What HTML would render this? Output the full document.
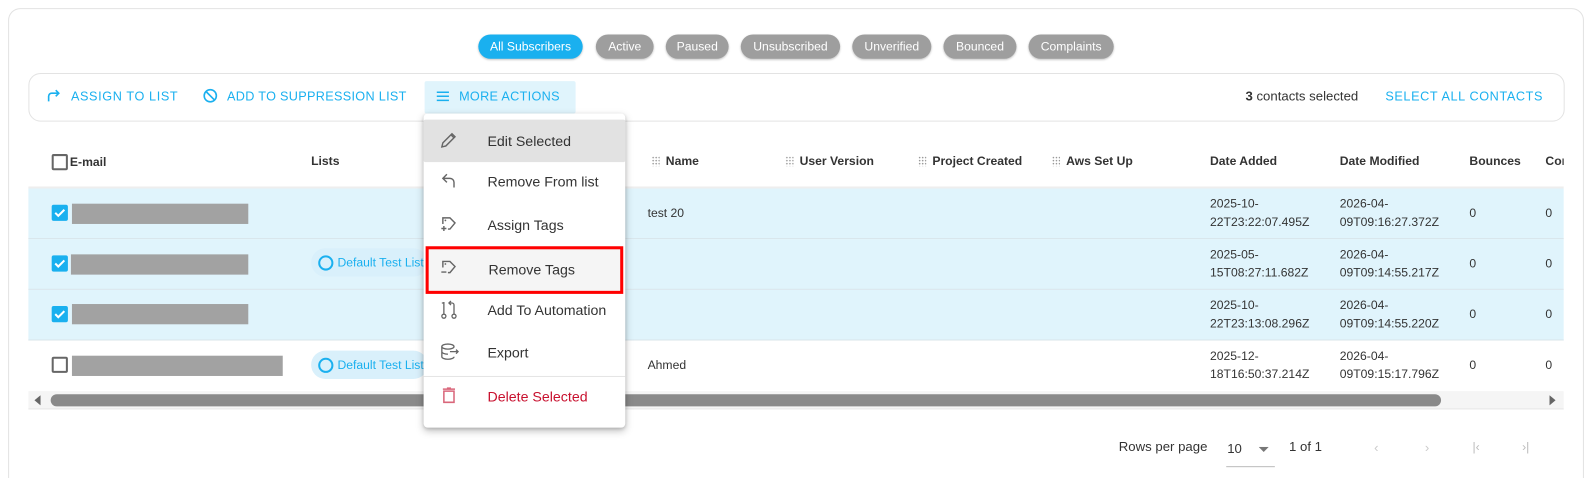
<!DOCTYPE html>
<html style="width:1589px;height:478px;overflow:hidden"><head><meta charset="utf-8">
<style>
*{box-sizing:border-box;margin:0;padding:0}
body{width:1589px;height:478px;background:#fff;font-family:"Liberation Sans",Arial,sans-serif;position:relative;overflow:hidden;color:#222}
#w{position:absolute;left:0;top:0;width:1568px;height:472px;transform:scale(1.0134);transform-origin:0 0;overflow:hidden}
.abs{position:absolute}
.card{left:8px;top:8px;width:1555px;height:480px;border:1px solid #e2e2e2;border-radius:12px}
.chip{position:absolute;top:34px;height:24px;border-radius:12px;background:#9e9e9e;color:#fff;font-size:12px;line-height:24px;text-align:center;box-shadow:0 1px 2px rgba(0,0,0,.25)}
.tb{left:28px;top:72px;width:1516px;height:48px;border:1px solid #e3e3e3;border-radius:12px}
.btn{position:absolute;top:88px;font-size:12.5px;letter-spacing:0.6px;color:#1ab0ef;font-weight:500}
.th{position:absolute;top:152px;font-size:12px;font-weight:bold;color:#333}
.row{position:absolute;left:28px;width:1515px;border-bottom:1px solid #d8e4ea}
.sel{background:#e0f4fc}
.cb{position:absolute;left:51px;width:16px;height:16px;border-radius:2px}
.cbon{background:#1ab0ef}
.cboff{border:2px solid #666;background:#fff}
.blur{position:absolute;height:20px;background:#a2a2a2}
.td{position:absolute;font-size:12px;color:#333;line-height:18px}
.chipl{position:absolute;left:307px;width:115px;height:28px;border-radius:14px;background:#d9f0fb;color:#1ab0ef;font-size:12px;line-height:28px;padding-left:26px;overflow:hidden;white-space:nowrap}
.chipl:before{content:"";position:absolute;left:7px;top:7px;width:11px;height:11px;border:2px solid #1ab0ef;border-radius:50%}
.menu{left:418px;top:112px;width:199px;height:310px;background:#fff;border-radius:4px;box-shadow:0 3px 8px rgba(0,0,0,.25),0 1px 3px rgba(0,0,0,.15)}
.mi{position:absolute;left:0;width:199px;height:42px;font-size:14px;color:#333;line-height:42px;padding-left:63px}
.mi svg{position:absolute;left:16px;top:11px}
.grip{display:inline-block;width:8px;height:10px;margin-right:6px;background-image:radial-gradient(#999 0.8px,transparent 0.9px);background-size:3px 3px;vertical-align:-1px}
</style></head><body><div id="w">
<div class="abs card"></div>
<div class="chip" style="left:472px;width:103px;background:#1ab0ef">All Subscribers</div>
<div class="chip" style="left:588px;width:57px">Active</div>
<div class="chip" style="left:657px;width:62px">Paused</div>
<div class="chip" style="left:731px;width:98px">Unsubscribed</div>
<div class="chip" style="left:841px;width:78px">Unverified</div>
<div class="chip" style="left:931px;width:72px">Bounced</div>
<div class="chip" style="left:1015px;width:84px">Complaints</div>

<div class="abs tb"></div>
<svg class="abs" style="left:46px;top:87px" width="14" height="14" viewBox="0 0 14 14"><path d="M2 13V8a3 3 0 0 1 3-3h7M9 2l3 3-3 3" fill="none" stroke="#1ab0ef" stroke-width="1.6"/></svg>
<div class="btn" style="left:70px">ASSIGN TO LIST</div>
<svg class="abs" style="left:200px;top:87px" width="15" height="15" viewBox="0 0 15 15"><circle cx="7.5" cy="7.5" r="6" fill="none" stroke="#1ab0ef" stroke-width="1.6"/><path d="M3.3 3.3l8.4 8.4" stroke="#1ab0ef" stroke-width="1.6"/></svg>
<div class="btn" style="left:224px;letter-spacing:0.3px">ADD TO SUPPRESSION LIST</div>
<div class="abs" style="left:419px;top:80px;width:149px;height:32px;background:#e0f4fc;border-radius:2px"></div>
<svg class="abs" style="left:430px;top:89px" width="14" height="12" viewBox="0 0 14 12"><path d="M1 2h12M1 6h12M1 10h12" stroke="#1ab0ef" stroke-width="1.5"/></svg>
<div class="btn" style="left:453px;letter-spacing:0.3px">MORE ACTIONS</div>
<div class="abs" style="left:1229px;top:87px;font-size:13px;color:#333"><b>3</b> contacts selected</div>
<div class="btn" style="left:1367px">SELECT ALL CONTACTS</div>

<div class="abs" style="left:51px;top:152px;width:16px;height:16px;border:2px solid #666;border-radius:2px"></div>
<div class="th" style="left:69px;top:153px">E-mail</div>
<div class="th" style="left:307px">Lists</div>
<div class="th" style="left:643px"><span class="grip"></span>Name</div>
<div class="th" style="left:775px"><span class="grip"></span>User Version</div>
<div class="th" style="left:906px"><span class="grip"></span>Project Created</div>
<div class="th" style="left:1038px"><span class="grip"></span>Aws Set Up</div>
<div class="th" style="left:1194px">Date Added</div>
<div class="th" style="left:1322px">Date Modified</div>
<div class="th" style="left:1450px">Bounces</div>
<div class="th" style="left:1525px;width:18px;overflow:hidden;white-space:nowrap">Complaints</div>
<div class="abs" style="left:28px;top:184px;width:1515px;height:2px;background:#eee"></div>

<div class="row sel" style="top:186px;height:50px"></div>
<div class="row sel" style="top:236px;height:50px"></div>
<div class="row sel" style="top:286px;height:50px"></div>
<div class="row" style="top:336px;height:49px;border-bottom:none"></div>

<div class="cb cbon" style="top:202px"></div><div class="blur" style="left:71px;top:201px;width:174px"></div>
<div class="cb cbon" style="top:252px"></div><div class="blur" style="left:70px;top:251px;width:175px"></div>
<div class="cb cbon" style="top:302px"></div><div class="blur" style="left:71px;top:300px;width:174px"></div>
<div class="cb cboff" style="top:352px"></div><div class="blur" style="left:71px;top:351px;width:208px"></div>
<svg class="abs" style="left:51px;top:202px" width="16" height="116"><g fill="none" stroke="#fff" stroke-width="2"><path d="M3.5 8l3 3 6-6"/><path d="M3.5 58l3 3 6-6"/><path d="M3.5 108l3 3 6-6"/></g></svg>
<div class="chipl" style="top:245px">Default Test List</div>
<div class="chipl" style="top:346px">Default Test List</div>
<div class="td" style="left:639px;top:201px">test 20</div>
<div class="td" style="left:639px;top:351px">Ahmed</div>

<div class="td" style="left:1194px;top:192px">2025-10-<br>22T23:22:07.495Z</div>
<div class="td" style="left:1322px;top:192px">2026-04-<br>09T09:16:27.372Z</div>
<div class="td" style="left:1450px;top:201px">0</div><div class="td" style="left:1525px;top:201px">0</div>
<div class="td" style="left:1194px;top:242px">2025-05-<br>15T08:27:11.682Z</div>
<div class="td" style="left:1322px;top:242px">2026-04-<br>09T09:14:55.217Z</div>
<div class="td" style="left:1450px;top:251px">0</div><div class="td" style="left:1525px;top:251px">0</div>
<div class="td" style="left:1194px;top:292px">2025-10-<br>22T23:13:08.296Z</div>
<div class="td" style="left:1322px;top:292px">2026-04-<br>09T09:14:55.220Z</div>
<div class="td" style="left:1450px;top:301px">0</div><div class="td" style="left:1525px;top:301px">0</div>
<div class="td" style="left:1194px;top:342px">2025-12-<br>18T16:50:37.214Z</div>
<div class="td" style="left:1322px;top:342px">2026-04-<br>09T09:15:17.796Z</div>
<div class="td" style="left:1450px;top:351px">0</div><div class="td" style="left:1525px;top:351px">0</div>

<div class="abs" style="left:28px;top:386px;width:1515px;height:18px;background:#f5f5f5;border-bottom:1px solid #e6e6e6"></div>
<div class="abs" style="left:50px;top:389px;width:1372px;height:12px;border-radius:6px;background:#8a8a8a"></div>
<svg class="abs" style="left:34px;top:390px" width="8" height="10"><path d="M6 0v10L0 5z" fill="#666"/></svg>
<svg class="abs" style="left:1528px;top:390px" width="8" height="10"><path d="M1 0v10l6-5z" fill="#666"/></svg>

<div class="abs" style="left:1104px;top:433px;font-size:13px;color:#333">Rows per page</div>
<div class="abs" style="left:1211px;top:435px;font-size:13px;color:#333">10</div>
<svg class="abs" style="left:1242px;top:441px" width="10" height="5"><path d="M0 0h10L5 5z" fill="#777"/></svg>
<div class="abs" style="left:1210px;top:460px;width:48px;height:1px;background:#bbb"></div>
<div class="abs" style="left:1272px;top:433px;font-size:13px;color:#333">1 of 1</div>
<div class="abs" style="left:1356px;top:434px;font-size:13px;color:#ccc">‹</div>
<div class="abs" style="left:1406px;top:434px;font-size:13px;color:#ccc">›</div>
<div class="abs" style="left:1453px;top:434px;font-size:12px;color:#bbb">|‹</div>
<div class="abs" style="left:1502px;top:434px;font-size:12px;color:#bbb">›|</div>

<div class="abs menu">
 <div class="mi" style="top:6px;background:#e2e2e2;height:42px;border-radius:2px">Edit Selected
  <svg width="18" height="18" viewBox="0 0 18 18"><path d="M2 16l1-4 9-9 3 3-9 9z M11 4l3 3" fill="none" stroke="#666" stroke-width="1.4"/></svg></div>
 <div class="mi" style="top:46px">Remove From list
  <svg width="18" height="18" viewBox="0 0 18 18"><path d="M7 3L3 7l4 4M3 7h7a4 4 0 0 1 4 4v5" fill="none" stroke="#666" stroke-width="1.4"/></svg></div>
 <div class="mi" style="top:89px">Assign Tags
  <svg width="18" height="18" viewBox="0 0 18 18"><path d="M3 9V3h7l5 5-5 6H8" fill="none" stroke="#666" stroke-width="1.4"/><circle cx="5.5" cy="5.5" r=".9" fill="#666"/><path d="M4 11v5M1.5 13.5h5" stroke="#666" stroke-width="1.4"/></svg></div>
 <div class="mi" style="top:131px;left:2px;width:195px;height:47px;background:#f5f5f5;border:3px solid #f00;line-height:40px;padding-left:59px">Remove Tags
  <svg style="left:11px;top:9px" width="18" height="18" viewBox="0 0 18 18"><path d="M3 9V3h7l5 5-5 6H8" fill="none" stroke="#666" stroke-width="1.4"/><circle cx="5.5" cy="5.5" r=".9" fill="#666"/><path d="M1.5 13.5h5" stroke="#666" stroke-width="1.4"/></svg></div>
 <div class="mi" style="top:173px">Add To Automation
  <svg width="18" height="20" viewBox="0 0 18 20"><circle cx="4" cy="16" r="2" fill="none" stroke="#666" stroke-width="1.3"/><circle cx="14" cy="16" r="2" fill="none" stroke="#666" stroke-width="1.3"/><path d="M4 14V2M2 3h2M14 14V5a2 2 0 0 0-2-2H9M11 1L9 3l2 2" fill="none" stroke="#666" stroke-width="1.3"/></svg></div>
 <div class="mi" style="top:215px">Export
  <svg width="20" height="18" viewBox="0 0 20 18"><ellipse cx="8" cy="4" rx="6" ry="2.5" fill="none" stroke="#666" stroke-width="1.3"/><path d="M2 4v10c0 1.4 2.7 2.5 6 2.5s6-1.1 6-2.5M2 9c0 1.4 2.7 2.5 6 2.5M10 9h8M16 7l2 2-2 2" fill="none" stroke="#666" stroke-width="1.3"/></svg></div>
 <div class="abs" style="left:0;top:259px;width:199px;height:1px;background:#e5e5e5"></div>
 <div class="mi" style="top:258px;color:#c8102e">Delete Selected
  <svg width="18" height="18" viewBox="0 0 18 18"><path d="M4 5h10v11H4zM3 3h12M7 2h4" fill="none" stroke="#d9667a" stroke-width="1.5"/></svg></div>
</div>
</div></body></html>
